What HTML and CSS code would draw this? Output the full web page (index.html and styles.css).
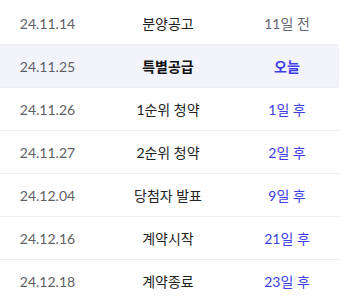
FILE: index.html
```html
<!DOCTYPE html>
<html lang="ko">
<head>
<meta charset="utf-8">
<link rel="stylesheet" href="styles.css">
</head>
<body>
<div class="schedule">
  <div class="row">
    <span class="date">24.11.14</span><span class="name">분양공고</span><span class="dday past">11일 전</span>
  </div>
  <div class="row today">
    <span class="date">24.11.25</span><span class="name">특별공급</span><span class="dday">오늘</span>
  </div>
  <div class="row">
    <span class="date">24.11.26</span><span class="name">1순위 청약</span><span class="dday">1일 후</span>
  </div>
  <div class="row">
    <span class="date">24.11.27</span><span class="name">2순위 청약</span><span class="dday">2일 후</span>
  </div>
  <div class="row">
    <span class="date">24.12.04</span><span class="name">당첨자 발표</span><span class="dday">9일 후</span>
  </div>
  <div class="row">
    <span class="date">24.12.16</span><span class="name">계약시작</span><span class="dday">21일 후</span>
  </div>
  <div class="row">
    <span class="date">24.12.18</span><span class="name">계약종료</span><span class="dday">23일 후</span>
  </div>
</div>
</body>
</html>
```

FILE: styles.css
```css
html, body {
  margin: 0;
  padding: 0;
  background: #ffffff;
  overflow: hidden;
}
body {
  font-family: Lato, "Noto Sans CJK KR", sans-serif;
  font-size: 14px;
}
.schedule {
  width: 339px;
  padding-top: 2px;
}
.row {
  display: grid;
  grid-template-columns: 95px 146px 92px;
  height: 42px;
  align-items: center;
  border-bottom: 1px solid #efeff1;
}
.row > span {
  text-align: center;
  white-space: nowrap;
}
.date {
  color: #5f5f66;
}
.name {
  color: #222222;
}
.dday {
  color: #3d3de8;
}
.dday.past {
  color: #666670;
}
.today {
  background: #f3f4fb;
}
.today .name {
  font-weight: 700;
  color: #111111;
}
.today .dday {
  font-weight: 700;
}
```
